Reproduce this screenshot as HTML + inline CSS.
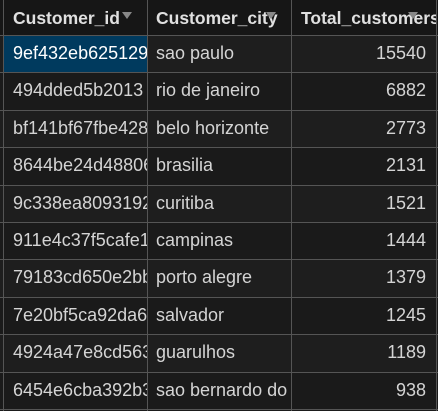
<!DOCTYPE html><html><head><style>
body{margin:0;background:#1b1b1b;width:438px;height:411px;overflow:hidden;font-family:"Liberation Sans",sans-serif;color:#d4d4d4}
.c{position:absolute;overflow:hidden;white-space:nowrap;font-size:18px;box-sizing:border-box}
.h{font-weight:bold;color:#e0e0e0;font-size:17.5px}
.v{position:absolute;top:0;width:1px;height:411px;background:#555}
.hl{position:absolute;left:0;width:438px;height:1px;background:#555}
.tri{position:absolute;width:0;height:0;border-left:5px solid transparent;border-right:5px solid transparent;border-top:7px solid #888}
</style></head><body>
<div style="position:absolute;left:0;top:0;width:438px;height:35px;background:#161616"></div>
<div id="rows"></div>
<div style="position:absolute;left:4px;top:36px;width:143px;height:36px;background:#003a5e"></div>
<script>
var ids=["9ef432eb625129","494dded5b2013","bf141bf67fbe428","8644be24d48806","9c338ea8093192","911e4c37f5cafe1","79183cd650e2bb","7e20bf5ca92da6","4924a47e8cd563","6454e6cba392b3"];
var cities=["sao paulo","rio de janeiro","belo horizonte","brasilia","curitiba","campinas","porto alegre","salvador","guarulhos","sao bernardo do"];
var nums=["15540","6882","2773","2131","1521","1444","1379","1245","1189","938"];
var h="";
for(var i=0;i<10;i++){var t=35+i*37.4;
h+='<div style="position:absolute;left:0;top:'+t+'px;width:438px;height:37.4px;background:'+(i%2?'#1a1a1a':'#1e1e1e')+'"></div>';}
document.getElementById('rows').innerHTML=h;
var o="";
for(var i=0;i<10;i++){var t=35+i*37.4;
o+='<div class="c" style="left:13px;top:'+(t+8)+'px;width:134px;color:'+(i==0?'#fff':'#d4d4d4')+'">'+ids[i]+'</div>';
o+='<div class="c" style="left:156px;top:'+(t+8)+'px;width:135px">'+cities[i]+'</div>';
o+='<div class="c" style="left:292px;top:'+(t+8)+'px;width:134px;text-align:right">'+nums[i]+'</div>';
o+='<div class="hl" style="top:'+(t)+'px"></div>';}
o+='<div class="hl" style="top:409px"></div>';
o+='<div class="v" style="left:3px"></div><div class="v" style="left:147px"></div><div class="v" style="left:291px"></div><div class="v" style="left:436px"></div>';
o+='<div class="c h" style="left:13px;top:8px;width:134px">Customer_id</div><div class="tri" style="left:122px;top:12px"></div>';
o+='<div class="c h" style="left:156px;top:8px;width:135px">Customer_city</div><div class="tri" style="left:266px;top:12px"></div>';
o+='<div class="c h" style="left:301px;top:8px;width:135px">Total_customers</div><div class="tri" style="left:408px;top:12px"></div>';
document.body.insertAdjacentHTML('beforeend',o);
</script>
</body></html>
